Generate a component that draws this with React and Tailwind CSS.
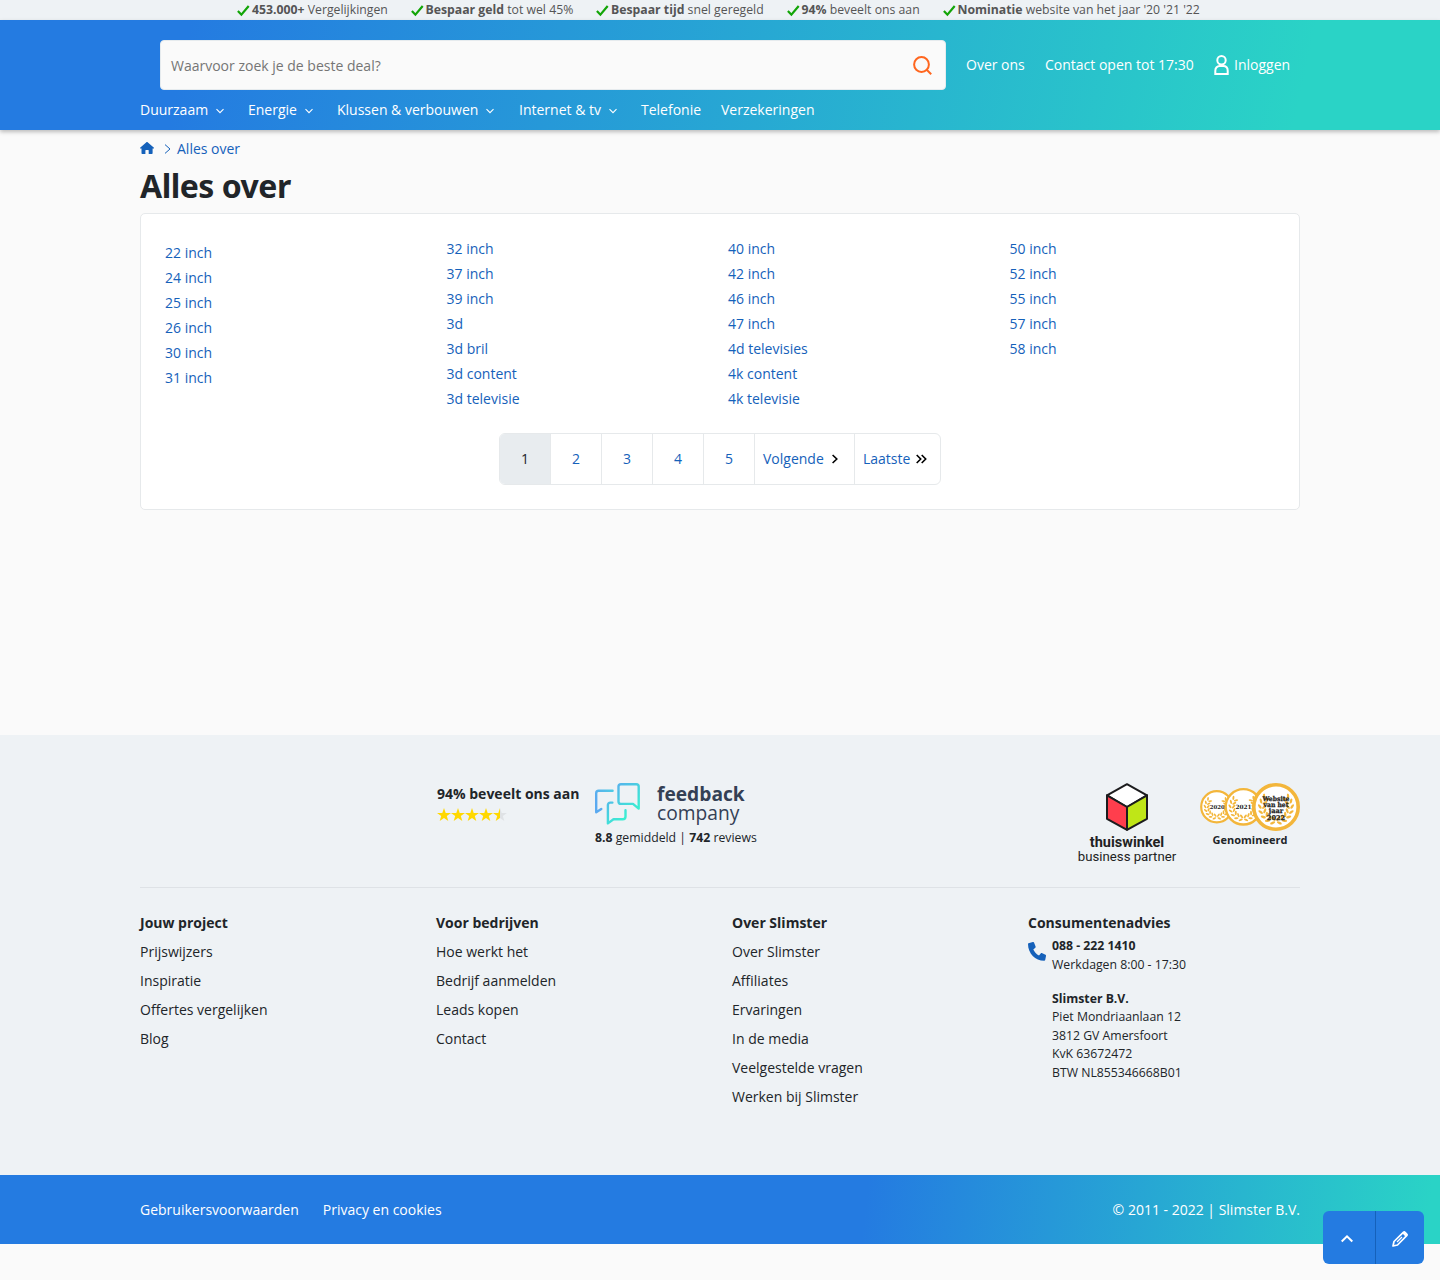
import React from "react";

const usps = [
  ["453.000+", "Vergelijkingen", "w-[173.5px]"],
  ["Bespaar geld", "tot wel 45%", "w-[185.5px]"],
  ["Bespaar tijd", "snel geregeld", "w-[190.5px]"],
  ["94%", "beveelt ons aan", "w-[156px]"],
  ["Nominatie", "website van het jaar '20 '21 '22", "w-[260px]"],
];

const nav = [
  ["Duurzaam", true, "w-[108px]"],
  ["Energie", true, "w-[89px]"],
  ["Klussen & verbouwen", true, "w-[182px]"],
  ["Internet & tv", true, "w-[122px]"],
  ["Telefonie", false, "w-[80px]"],
  ["Verzekeringen", false, "w-[100px]"],
];

const columns = [
  ["22 inch", "24 inch", "25 inch", "26 inch", "30 inch", "31 inch"],
  ["32 inch", "37 inch", "39 inch", "3d", "3d bril", "3d content", "3d televisie"],
  ["40 inch", "42 inch", "46 inch", "47 inch", "4d televisies", "4k content", "4k televisie"],
  ["50 inch", "52 inch", "55 inch", "57 inch", "58 inch"],
];

const footerColumns = [
  ["Jouw project", ["Prijswijzers", "Inspiratie", "Offertes vergelijken", "Blog"]],
  ["Voor bedrijven", ["Hoe werkt het", "Bedrijf aanmelden", "Leads kopen", "Contact"]],
  [
    "Over Slimster",
    ["Over Slimster", "Affiliates", "Ervaringen", "In de media", "Veelgestelde vragen", "Werken bij Slimster"],
  ],
];

function Check() {
  return (
    <svg className="mt-px h-3 w-[13px] shrink-0" viewBox="0 0 13 12" fill="none">
      <path d="M.9 6 4.400 9.700 11.700 1" stroke="#12a507" strokeWidth="2.2" />
    </svg>
  );
}

function Chevron() {
  return (
    <svg className="ml-2 mt-0.5 h-2 w-2" viewBox="0 0 8 8" fill="none">
      <path d="m.5 2.200 3.500 3.500 3.500-3.500" stroke="currentColor" strokeWidth="1.1" />
    </svg>
  );
}

const starPath = "M7 0 8.700 4.900H14L9.800 8 11.300 13 7 10 2.700 13 4.200 8 0 4.900H5.300Z";

function Stars() {
  return (
    <svg className="mt-1 h-[14px] w-[70px]" viewBox="0 0 70 14">
      <defs>
        <linearGradient id="half">
          <stop offset="50%" stopColor="#ffd800" />
          <stop offset="50%" stopColor="#dfe2e5" />
        </linearGradient>
      </defs>
      {[0, 1, 2, 3, 4].map((i) => (
        <path key={i} d={starPath} transform={`translate(${i * 14} 0)`} fill={i < 4 ? "#ffd800" : "url(#half)"} />
      ))}
    </svg>
  );
}

function FeedbackLogo() {
  return (
    <svg className="h-[42px] w-[45px]" viewBox="0 0 45 42" fill="none">
      <defs>
        <linearGradient id="fb" gradientUnits="userSpaceOnUse" x1="22" y1="2" x2="44" y2="24">
          <stop stopColor="#55b4ec" />
          <stop offset="1" stopColor="#3beed2" />
        </linearGradient>
        <linearGradient id="fb1" gradientUnits="userSpaceOnUse" x1="1" y1="16" x2="18" y2="8">
          <stop stopColor="#5aaaf0" />
          <stop offset="1" stopColor="#4fcbe4" />
        </linearGradient>
        <linearGradient id="fb2" gradientUnits="userSpaceOnUse" x1="12" y1="20" x2="28" y2="36">
          <stop stopColor="#50bfe8" />
          <stop offset="1" stopColor="#3beed2" />
        </linearGradient>
      </defs>
      <g strokeWidth="2.4" strokeLinecap="round" strokeLinejoin="round">
        <path stroke="url(#fb)" d="M26 1.200h15.300c1.400 0 2.400 1 2.400 2.400v22L38 20.900H26c-1.500 0-2.500-1-2.500-2.500V3.600c0-1.400 1-2.400 2.500-2.400Z" />
        <path stroke="url(#fb1)" d="M17.600 7.800H3.700c-1.500 0-2.500 1-2.500 2.500v19L6.300 26" />
        <path stroke="url(#fb2)" d="M17.400 19.600h-2.100c-1.400 0-2.400 1-2.400 2.400v18.400l5.600-4.100h9.200c1.800 0 2.800-1.200 2.800-2.700v-6.400" />
      </g>
    </svg>
  );
}

function Cube() {
  return (
    <svg className="ml-0.5 h-12 w-[42px]" viewBox="0 0 42 48" stroke="#1c1c1e" strokeWidth="2" strokeLinejoin="round">
      <path d="M21 1.200 41 12.300 21 24 1 12.300Z" fill="#fff" />
      <path d="M1 12.300 21 24V46.800L1 35.800Z" fill="#ff3e4d" />
      <path d="M41 12.300 21 24V46.800L41 35.800Z" fill="#bfe617" />
    </svg>
  );
}

const leafAngles = [14, 34, 54, 74, 94, 114, 134];

function Laurel({ cx, cy, r }) {
  return [-1, 1].map((side) => (
    <g key={side} transform={`translate(${cx} ${cy}) scale(${side} 1)`} fill="#f3b63b">
      {leafAngles.map((a) => (
        <g key={a} transform={`rotate(${-a}) translate(0 ${r})`}>
          <ellipse cx={r * 0.06} cy={-r * 0.15} rx={r * 0.19} ry={r * 0.085} transform="rotate(-38)" />
          <ellipse cx={r * 0.06} cy={r * 0.15} rx={r * 0.19} ry={r * 0.085} transform="rotate(38)" />
        </g>
      ))}
    </g>
  ));
}

function Badges() {
  const text = { fontFamily: '"DejaVu Serif", serif', fontWeight: 700, textAnchor: "middle", fill: "#222" };
  return (
    <svg className="h-12 w-[100px]" viewBox="0 0 100 48">
      <circle cx="16.800" cy="23.800" r="15.600" fill="#fff" stroke="#f3b63b" strokeWidth="2.200" />
      <Laurel cx={16.8} cy={23.8} r={10.2} />
      <text x="17.300" y="26" fontSize="5.400" {...text}>2020</text>
      <circle cx="43.400" cy="23.800" r="17.700" fill="#fff" stroke="#f3b63b" strokeWidth="2.400" />
      <Laurel cx={43.4} cy={23.8} r={11.6} />
      <text x="43.600" y="26" fontSize="5.800" {...text}>2021</text>
      <circle cx="76" cy="24" r="22.200" fill="#fff" stroke="#f3b63b" strokeWidth="3.600" />
      <Laurel cx={76} cy={24} r={14} />
      <g fontSize="6.600" stroke="#222" strokeWidth="0.250" {...text}>
        <text x="76" y="17.800" textLength="27" lengthAdjust="spacingAndGlyphs">Website</text>
        <text x="76" y="24" textLength="25" lengthAdjust="spacingAndGlyphs">van het</text>
        <text x="76" y="30.300">jaar</text>
        <text x="76" y="36.800">2022</text>
      </g>
    </svg>
  );
}

const pageCell = "flex h-[50px] items-center border-r border-[#e6e9eb]";

export default function App() {
  return (
    <div className="flex min-h-[1280px] flex-col bg-[#fafafa] font-['Open_Sans',sans-serif] text-sm text-[#212529]">
      <div className="flex h-5 items-center bg-[#eef2f5] pl-[237px] text-[12.25px] text-[#555]">
        {usps.map(([strong, text, width]) => (
          <div key={strong} className={`flex shrink-0 items-center gap-0.5 whitespace-nowrap ${width}`}>
            <Check />
            <span><b>{strong}</b> {text}</span>
          </div>
        ))}
      </div>

      <header className="z-10 h-[110px] bg-[linear-gradient(102deg,#247be1_13%,#2ad3c6_90%)] text-white shadow-[0_2px_4px_rgba(0,0,0,0.25)]">
        <div className="mx-auto w-[1160px] pt-5">
          <div className="flex items-center pl-5">
            <div className="flex h-[50px] w-[786px] items-center justify-between rounded border border-[#e6ebee] bg-[#fafafa] pl-2.5 pr-[11px] text-[#757575]">
              <span className="pt-px">Waarvoor zoek je de beste deal?</span>
              <svg className="mt-0.5 h-[22px] w-[22px]" viewBox="0 0 22 22" fill="none" stroke="#ff661f" strokeWidth="2">
                <circle cx="9.500" cy="9.500" r="7.400" />
                <path d="m14.700 14.700 4.500 4.500" />
              </svg>
            </div>
            <span className="ml-5 w-[79px]">Over ons</span>
            <span className="w-[168.5px]">Contact open tot 17:30</span>
            <svg className="mr-[5.5px] h-5 w-[15px]" viewBox="0 0 15 20" fill="none" stroke="white" strokeWidth="2">
              <circle cx="7.500" cy="5.300" r="4.200" />
              <path d="M1.300 19v-3.200c0-3 2-4.700 4.400-4.700h3.600c2.400 0 4.400 1.700 4.400 4.700V19Z" />
            </svg>
            <span>Inloggen</span>
          </div>
          <nav className="flex h-10 items-center">
            {nav.map(([label, open, width]) => (
              <a key={label} className={`flex shrink-0 items-center whitespace-nowrap ${width}`}>
                {label}
                {open && <Chevron />}
              </a>
            ))}
          </nav>
        </div>
      </header>

      <main className="mx-auto h-[605px] w-[1160px]">
        <div className="flex h-[38px] items-center text-[#1561ba]">
          <svg className="-mt-0.5 h-3 w-[14px]" viewBox="0 0 14 12" fill="currentColor">
            <path d="M7.600.2 14 5.700c.2.500 0 .900-.6.900h-.8v4.700c0 .400-.3.700-.7.700H8.700V8.500c0-.300-.2-.500-.5-.500H5.900c-.3 0-.5.200-.5.500V12H2.200c-.4 0-.7-.3-.7-.7V6.600H.7C.1 6.600-.1 6.200.1 5.700L6.400.2c.4-.3.800-.3 1.200 0Z" />
          </svg>
          <svg className="ml-2.5 mr-1.5 h-[10px] w-[7px]" viewBox="0 0 7 10" fill="none">
            <path d="m1 .6 5 4.400-5 4.400" stroke="currentColor" />
          </svg>
          <span>Alles over</span>
        </div>
        <h1 className="flex h-[45px] items-center whitespace-nowrap pb-2.5 font-['Noto_Sans','Open_Sans',sans-serif] text-[32px] font-bold leading-none tracking-[-0.5px]">
          Alles over
        </h1>
        <section className="h-[297px] rounded-[5px] border border-[#e6e9eb] bg-white px-6">
          <div className="grid h-[219px] grid-cols-[281.5px_281.5px_281.5px_1fr] pt-[22px] text-[#1561ba]">
            {columns.map((items, i) => (
              <ul key={i} className={i === 0 ? "pt-1" : ""}>
                {items.map((item) => (
                  <li key={item} className="h-[25px] leading-[25px]">{item}</li>
                ))}
              </ul>
            ))}
          </div>
          <div className="mx-auto flex h-[52px] w-[442px] overflow-hidden rounded-md border border-[#e6e9eb] text-[#1561ba]">
            <span className={`${pageCell} w-[51px] justify-center bg-[#e8ecef] text-[#212529]`}>1</span>
            {["2", "3", "4", "5"].map((n) => (
              <span key={n} className={`${pageCell} w-[51px] justify-center`}>{n}</span>
            ))}
            <span className={`${pageCell} w-[100px] pl-2`}>
              Volgende
              <svg className="ml-[7px] h-[10px] w-2" viewBox="0 0 8 10" fill="none" stroke="#000" strokeWidth="1.6">
                <path d="m1.600 1 4.200 4-4.200 4" />
              </svg>
            </span>
            <span className="flex items-center pl-2">
              Laatste
              <svg className="ml-1.5 h-[10px] w-[11px]" viewBox="0 0 11 10" fill="none" stroke="#000" strokeWidth="1.6">
                <path d="m.7 1 4 4-4 4M5.700 1l4 4-4 4" />
              </svg>
            </span>
          </div>
        </section>
      </main>

      <footer>
        <div className="h-[440px] bg-[#eef2f5]">
          <div className="mx-auto w-[1160px] pt-12">
            <div className="flex h-[105px] items-start border-b border-[#dee2e6] pl-[297px]">
              <div className="w-[158px]">
                <p className="whitespace-nowrap pt-px font-bold leading-5">94% beveelt ons aan</p>
                <Stars />
              </div>
              <div>
                <div className="flex h-[45px]">
                  <FeedbackLogo />
                  <div className="ml-[17px] pt-px text-[19.2px] leading-[19px] text-[#344055]">
                    <p className="font-bold">feedback</p>
                    <p>company</p>
                  </div>
                </div>
                <p className="whitespace-nowrap text-[12.25px] leading-5"><b>8.8</b> gemiddeld | <b>742</b> reviews</p>
              </div>
              <div className="ml-auto flex w-[100px] flex-col items-center whitespace-nowrap font-['Roboto',sans-serif] leading-[14px] text-[#222]">
                <Cube />
                <b className="ml-0.5 mt-[5px] text-[14.5px]">thuiswinkel</b>
                <span className="ml-0.5 text-[13.2px]">business partner</span>
              </div>
              <div className="ml-6 flex w-[100px] flex-col items-center">
                <Badges />
                <b className="mt-px text-[11px] leading-4">Genomineerd</b>
              </div>
            </div>

            <div className="grid grid-cols-[296px_296px_296px_1fr] pt-5">
              {footerColumns.map(([title, links]) => (
                <div key={title}>
                  <h2 className="h-[29px] font-bold leading-[29px]">{title}</h2>
                  {links.map((link) => (
                    <a key={link} className="block h-[29px] leading-[29px]">{link}</a>
                  ))}
                </div>
              ))}
              <div>
                <h2 className="h-[29px] font-bold leading-[29px]">Consumentenadvies</h2>
                <div className="flex text-[12.25px] leading-[18.5px]">
                  <svg className="mr-1.5 mt-[5px] h-[19px] w-[18px]" viewBox="0 0 18 19" fill="#1561ba">
                    <path d="M1.300.9 4.900 0c.5-.1.900.1 1.100.6l1.600 4c.1.400 0 .8-.3 1.200l-2 1.700c1.200 2.600 3.200 4.700 5.700 6l1.700-2.100c.3-.3.700-.4 1.100-.3l3.700 1.700c.4.200.6.600.5 1.100l-.8 4c-.1.500-.5.800-1 .8C7.300 18.700 0 11.200 0 1.900c0-.5.8-1 1.300-1Z" />
                  </svg>
                  <div className="pt-[0.3px]">
                    <p className="font-bold">088 - 222 1410</p>
                    <p>Werkdagen 8:00 - 17:30</p>
                    <p className="mt-[15.5px] font-bold">Slimster B.V.</p>
                    <p>Piet Mondriaanlaan 12</p>
                    <p>3812 GV Amersfoort</p>
                    <p>KvK 63672472</p>
                    <p>BTW NL855346668B01</p>
                  </div>
                </div>
              </div>
            </div>
          </div>
        </div>
        <div className="h-[69px] bg-[linear-gradient(97deg,#247be1_60%,#2ad3c6_99%)] text-white">
          <div className="mx-auto flex h-full w-[1160px] items-center">
            <a className="mr-6">Gebruikersvoorwaarden</a>
            <a>Privacy en cookies</a>
            <span className="ml-auto">© 2011 - 2022 | Slimster B.V.</span>
          </div>
        </div>
      </footer>

      <div className="fixed bottom-4 right-4 flex h-[53px] w-[101px] rounded-md bg-[#247be1] text-white">
        <button className="flex w-[53px] items-center justify-center border-r border-[#1561ba] pr-1">
          <svg className="mt-0.5 h-3 w-3" viewBox="0 0 12 12" fill="none" stroke="currentColor" strokeWidth="2">
            <path d="M.7 8.500 6 3.300l5.300 5.200" />
          </svg>
        </button>
        <button className="flex w-12 items-center justify-center pt-0.5">
          <svg className="h-4 w-4" viewBox="0 0 16 16" fill="none" stroke="currentColor" strokeWidth="1.700" strokeLinejoin="round">
            <path d="M1 15l1-4.500L11.300 1.300c.6-.5 1.200-.5 1.700 0l1.700 1.700c.5.500.5 1.100 0 1.700L5.500 14Z" />
            <path d="m5 11 5-5" strokeWidth="1.300" />
            <path d="m10.300 2.300 3.400 3.400 1.300-1.300c.5-.6.4-1-.1-1.600l-1.600-1.600c-.6-.5-1-.5-1.600 0Z" fill="currentColor" stroke="none" />
          </svg>
        </button>
      </div>
    </div>
  );
}
